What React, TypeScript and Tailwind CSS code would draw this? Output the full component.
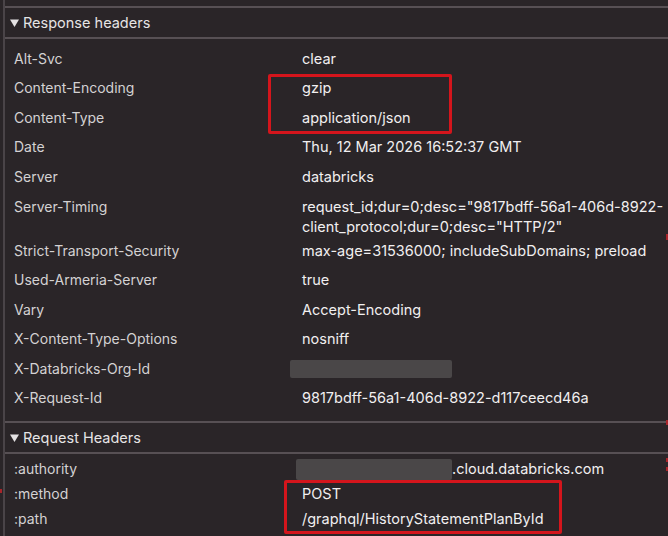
import React from "react";

type Row = { name: string; value: React.ReactNode; tall?: boolean };

const responseRows: Row[] = [
  { name: "Alt-Svc", value: "clear" },
  { name: "Content-Encoding", value: "gzip" },
  { name: "Content-Type", value: "application/json" },
  { name: "Date", value: "Thu, 12 Mar 2026 16:52:37 GMT" },
  { name: "Server", value: "databricks" },
  {
    name: "Server-Timing",
    tall: true,
    value: (
      <>
        <div className="whitespace-nowrap">request_id;dur=0;desc="9817bdff-56a1-406d-8922-</div>
        <div className="whitespace-nowrap">client_protocol;dur=0;desc="HTTP/2"</div>
      </>
    ),
  },
  { name: "Strict-Transport-Security", value: "max-age=31536000; includeSubDomains; preload" },
  { name: "Used-Armeria-Server", value: "true" },
  { name: "Vary", value: "Accept-Encoding" },
  { name: "X-Content-Type-Options", value: "nosniff" },
  {
    name: "X-Databricks-Org-Id",
    value: <div className="ml-[-12px] h-[18px] w-[162px] rounded-[2px] bg-[#4a4748]" />,
  },
  { name: "X-Request-Id", value: "9817bdff-56a1-406d-8922-d117ceecd46a" },
];

const requestRows: Row[] = [
  {
    name: ":authority",
    value: (
      <div className="flex items-center">
        <div className="ml-[-6px] h-[21px] w-[156px] rounded-[2px] bg-[#4a4748]" />
        <span>.cloud.databricks.com</span>
      </div>
    ),
  },
  { name: ":method", value: "POST" },
  { name: ":path", value: "/graphql/HistoryStatementPlanById" },
];

function Triangle() {
  return (
    <svg width="9" height="8" viewBox="0 0 9 8" className="mr-[4px]">
      <path d="M0 0.5 L9 0.5 L4.5 8 Z" fill="#e4e2e3" />
    </svg>
  );
}

function SectionHeader({ title }: { title: string }) {
  return (
    <div>
      <div className="h-[2px] bg-[#575054]" />
      <div className="flex h-[29px] items-center pl-[5px] text-[14.5px] text-[#e6e4e5]">
        <Triangle />
        <span>{title}</span>
      </div>
      <div className="h-[2px] bg-[#575054]" />
    </div>
  );
}

function HeaderRow({ row, h }: { row: Row; h: string }) {
  return (
    <div className={`flex ${row.tall ? "h-[44.5px] items-start pt-[5px]" : h + " items-center"}`}>
      <div className="w-[297px] shrink-0 pl-[9px] text-[14px] leading-[20px] text-[#d4d2d3]">{row.name}</div>
      <div className="min-w-0 flex-1 text-[14.5px] leading-[20px] text-[#f1eff0]">{row.value}</div>
    </div>
  );
}

export default function App() {
  return (
    <div
      className="relative h-[536px] w-[668px] overflow-hidden bg-[#2a2528] pl-[3px]"
      style={{ fontFamily: "Inter, 'Liberation Sans', sans-serif" }}
    >
      <div className="h-full border-l-2 border-[#4a4448] pt-[6px]">
        <SectionHeader title="Response headers" />
        <div className="pt-[5px] pb-[8px]">
          {responseRows.map((r) => (
            <HeaderRow key={r.name} row={r} h="h-[29.5px]" />
          ))}
        </div>
        <SectionHeader title="Request Headers" />
        <div className="pt-[2.5px]">
          {requestRows.map((r) => (
            <HeaderRow key={r.name} row={r} h="h-[25px]" />
          ))}
        </div>
      </div>

      {/* annotation boxes */}
      <div className="absolute left-[268px] top-[74px] h-[60px] w-[184px] rounded-[2px] border-[3px] border-[#d4151c]" />
      <div className="absolute left-[284px] top-[480px] h-[54px] w-[278px] rounded-[2px] border-[3px] border-[#d4151c]" />
      <div className="absolute right-0 top-[234px] h-[6px] w-[2px] bg-[#a8242a]" />
      <div className="absolute right-0 top-[420px] h-[5px] w-[2px] bg-[#a8242a]" />
      <div className="absolute right-0 top-[458px] h-[4px] w-[2px] bg-[#a8242a]" />
      <div className="absolute right-0 top-[467px] h-[4px] w-[2px] bg-[#a8242a]" />
      <div className="absolute left-0 top-[489px] h-[4px] w-[2px] bg-[#a8242a]" />
    </div>
  );
}
